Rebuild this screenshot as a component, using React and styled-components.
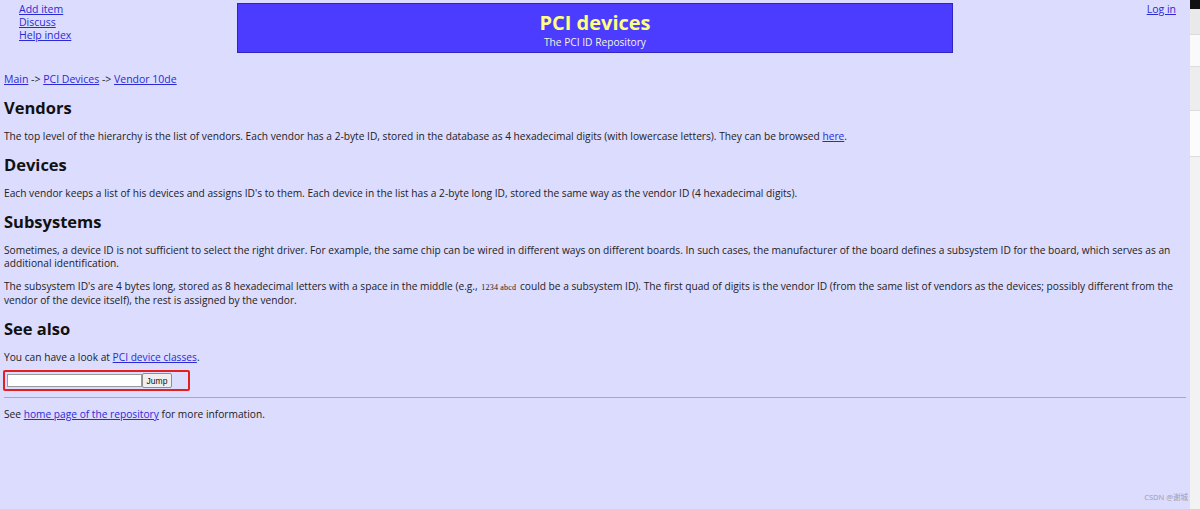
import React from "react";
import styled, { createGlobalStyle } from "styled-components";

const GlobalStyle = createGlobalStyle`
  html, body {
    margin: 0;
    padding: 0;
    background: #f4f4f4;
  }
  body {
    font-family: "Open Sans", "Noto Sans", Arial, sans-serif;
    color: #222;
  }
`;

const Shell = styled.div`
  display: flex;
  width: 1200px;
  height: 509px;
  overflow: hidden;
`;

const Page = styled.div`
  position: relative;
  width: 1190px;
  background: #dcdcff;
  padding: 0 4px;
  box-sizing: border-box;
  font-size: 10.2px;
  line-height: 13px;
`;

const SideStrip = styled.div`
  width: 10px;
  display: flex;
  flex-direction: column;
`;

const StripBlock = styled.div`
  height: ${(p) => p.h}px;
  background: ${(p) => p.bg};
  border-bottom: ${(p) => (p.line ? "1px solid #dcdcdc" : "none")};
  flex: ${(p) => (p.grow ? 1 : "none")};
`;

const Header = styled.div`
  display: flex;
  justify-content: space-between;
  align-items: flex-start;
  padding-top: 3px;
`;

const NavList = styled.ul`
  list-style: none;
  box-sizing: border-box;
  margin: 0;
  padding: 0 0 0 15px;
  width: 160px;
  font-size: 10.5px;
`;

const Link = styled.a`
  color: #2a2ad6;
  text-decoration: underline;
  cursor: pointer;
`;

const Banner = styled.div`
  width: 716px;
  height: 50px;
  box-sizing: border-box;
  background: #4b3cff;
  border: 1px solid #2f23c4;
  display: flex;
  flex-direction: column;
  align-items: center;
  padding-top: 6px;
`;

const BannerTitle = styled.div`
  color: #ffff80;
  font-weight: 700;
  font-size: 20px;
  line-height: 25px;
`;

const BannerSub = styled.div`
  color: #f4f4e0;
  font-size: 10.2px;
  line-height: 13px;
  margin-top: 1px;
`;

const LoginBox = styled.div`
  width: 160px;
  box-sizing: border-box;
  text-align: right;
  padding-right: 10px;
  font-size: 10.5px;
  line-height: 13px;
`;

const Crumbs = styled.div`
  margin-top: 20px;
  font-size: 10.5px;
`;

const Heading = styled.h2`
  font-size: 16.5px;
  line-height: 20px;
  font-weight: 700;
  color: #111;
  margin: 12px 0;
`;

const Para = styled.p`
  margin: 0;
  & + & {
    margin-top: 10px;
  }
`;

const Code = styled.code`
  font-family: "Liberation Serif", serif;
  font-size: 8px;
  letter-spacing: 0.2px;
  padding: 0 1px;
`;

const JumpForm = styled.form`
  display: flex;
  align-items: center;
  width: 187px;
  height: 21px;
  box-sizing: border-box;
  margin: 6px 0 0 -1px;
  padding-left: 2px;
  border: 2px solid #e32020;
  border-radius: 2px;
`;

const JumpInput = styled.input`
  width: 135px;
  height: 13px;
  box-sizing: border-box;
  border: 1px solid #9a9a9a;
  background: #fff;
  padding: 0;
  margin: 0;
`;

const JumpButton = styled.button`
  height: 15px;
  width: 30px;
  box-sizing: border-box;
  padding: 0;
  margin: 0;
  font-family: "Liberation Sans", Arial, sans-serif;
  font-size: 8.5px;
  line-height: 12px;
  color: #111;
  background: #efefef;
  border: 1px solid #8f8f8f;
  border-radius: 2px;
`;

const Rule = styled.hr`
  margin: 6px 0 10px;
  border: none;
  border-top: 1px solid #a8a8b8;
`;

const Watermark = styled.div`
  position: absolute;
  right: 2px;
  bottom: 5px;
  font-size: 7.5px;
  color: #a0a0b0;
  font-family: "Noto Sans", "Noto Sans CJK SC", sans-serif;
`;

const App = () => (
  <Shell>
    <GlobalStyle />
    <Page>
      <Header>
        <NavList>
          <li><Link>Add item</Link></li>
          <li><Link>Discuss</Link></li>
          <li><Link>Help index</Link></li>
        </NavList>
        <Banner>
          <BannerTitle>PCI devices</BannerTitle>
          <BannerSub>The PCI ID Repository</BannerSub>
        </Banner>
        <LoginBox>
          <Link>Log in</Link>
        </LoginBox>
      </Header>

      <Crumbs>
        <Link>Main</Link> -&gt; <Link>PCI Devices</Link> -&gt; <Link>Vendor 10de</Link>
      </Crumbs>

      <Heading>Vendors</Heading>
      <Para>
        The top level of the hierarchy is the list of vendors. Each vendor has a 2-byte ID, stored in the database as 4
        hexadecimal digits (with lowercase letters). They can be browsed <Link>here</Link>.
      </Para>

      <Heading>Devices</Heading>
      <Para>
        Each vendor keeps a list of his devices and assigns ID's to them. Each device in the list has a 2-byte long ID,
        stored the same way as the vendor ID (4 hexadecimal digits).
      </Para>

      <Heading>Subsystems</Heading>
      <Para>
        Sometimes, a device ID is not sufficient to select the right driver. For example, the same chip can be wired in
        different ways on different boards. In such cases, the manufacturer of the board defines a subsystem ID for the
        board, which serves as an additional identification.
      </Para>
      <Para>
        The subsystem ID's are 4 bytes long, stored as 8 hexadecimal letters with a space in the middle (e.g.,{" "}
        <Code>1234 abcd</Code> could be a subsystem ID). The first quad of digits is the vendor ID (from the same list
        of vendors as the devices; possibly different from the vendor of the device itself), the rest is assigned by the
        vendor.
      </Para>

      <Heading>See also</Heading>
      <Para>
        You can have a look at <Link>PCI device classes</Link>.
      </Para>

      <JumpForm onSubmit={(e) => e.preventDefault()}>
        <JumpInput type="text" />
        <JumpButton type="submit">Jump</JumpButton>
      </JumpForm>

      <Rule />

      <Para>
        See <Link>home page of the repository</Link> for more information.
      </Para>

      <Watermark>CSDN @谢城</Watermark>
    </Page>
    <SideStrip>
      <StripBlock h={9} bg="#111" />
      <StripBlock h={25} bg="#e9e9e9" line />
      <StripBlock h={31} bg="#fafafa" line />
      <StripBlock h={43} bg="#ededed" line />
      <StripBlock h={45} bg="#fcfcfc" line />
      <StripBlock grow bg="#f2f2f2" />
    </SideStrip>
  </Shell>
);

export default App;
